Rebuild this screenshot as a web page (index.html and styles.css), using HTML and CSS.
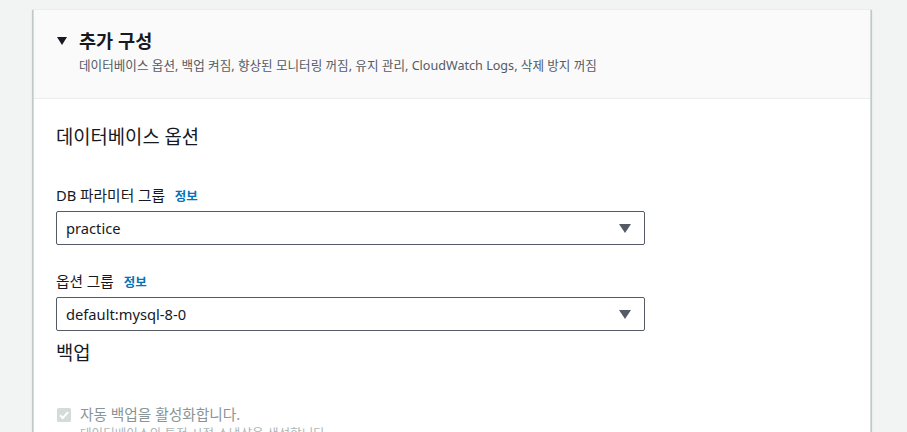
FILE: index.html
```html
<!DOCTYPE html>
<html lang="ko">
<head>
<meta charset="utf-8">
<link rel="stylesheet" href="styles.css">
</head>
<body>
<div class="page">
  <section class="card">
    <header class="card-head">
      <div class="title-row">
        <span class="caret"></span>
        <h2 class="title">추가 구성</h2>
      </div>
      <p class="desc">데이터베이스 옵션, 백업 켜짐, 향상된 모니터링 꺼짐, 유지 관리, CloudWatch Logs, 삭제 방지 꺼짐</p>
    </header>
    <div class="card-body">
      <h3 class="section-title">데이터베이스 옵션</h3>
      <div class="field">
        <label class="label">DB 파라미터 그룹 <a class="info">정보</a></label>
        <div class="select"><span>practice</span><span class="arrow"></span></div>
      </div>
      <div class="field">
        <label class="label">옵션 그룹 <a class="info">정보</a></label>
        <div class="select"><span>default:mysql-8-0</span><span class="arrow"></span></div>
      </div>
      <h3 class="section-title backup">백업</h3>
      <div class="check-row">
        <span class="checkbox">
          <svg width="14" height="14" viewBox="0 0 14 14"><rect x="0" y="0" width="14" height="14" rx="1.5" fill="#d5dbdb"/><path d="M3 7.2 L5.8 10 L11 4.2" fill="none" stroke="#fff" stroke-width="2"/></svg>
        </span>
        <div class="check-text">
          <div class="check-label">자동 백업을 활성화합니다.</div>
          <div class="check-desc">데이터베이스의 특정 시점 스냅샷을 생성합니다.</div>
        </div>
      </div>
    </div>
  </section>
</div>
</body>
</html>
```

FILE: styles.css
```css
* { box-sizing: border-box; }
html, body { margin: 0; padding: 0; }
body {
  background: #f2f3f3;
  font-family: "Noto Sans", "Noto Sans CJK KR", sans-serif;
  color: #16191f;
  overflow: hidden;
}
.page {
  padding: 9px 36px 0 33px;
}
.card {
  background: #fff;
  border-left: 1px solid #d5dbdb;
  border-right: 1px solid #d5dbdb;
  border-top: 1px solid #eaeded;
  box-shadow: 0 1px 1px 0 rgba(0,28,36,0.3), 1px 1px 1px 0 rgba(0,28,36,0.15), -1px 1px 1px 0 rgba(0,28,36,0.15);
  width: 838px;
}
.card-head {
  background: #fafafa;
  border-bottom: 1px solid #eaeded;
  padding: 19px 22px 0 22px;
  height: 89px;
}
.title-row {
  display: flex;
  align-items: center;
  gap: 12px;
}
.caret {
  width: 0; height: 0;
  border-left: 5px solid transparent;
  border-right: 5px solid transparent;
  border-top: 8px solid #16191f;
  margin-left: 1px;
}
.title {
  margin: 0;
  font-size: 18.6px;
  font-weight: 700;
  line-height: 24px;
}
.desc {
  margin: 5px 0 0 23px;
  font-size: 12.6px;
  line-height: 16px;
  color: #545b64;
}
.card-body {
  padding: 24px 22px 0 22px;
}
.section-title {
  margin: 0;
  font-size: 18.8px;
  font-weight: 400;
  line-height: 28px;
}
.field { margin-top: 34px; width: 589px; }
.field + .field { margin-top: 26px; }
.label {
  display: block;
  font-size: 14.7px;
  line-height: 20px;
  margin-bottom: 4px;
}
.info {
  font-size: 12.5px;
  font-weight: 700;
  color: #0073bb;
  margin-left: 6px;
}
.select {
  height: 34px;
  border: 1px solid #545b64;
  border-radius: 2px;
  display: flex;
  align-items: center;
  justify-content: space-between;
  padding: 0 13px 0 9px;
  font-size: 14.7px;
}
.arrow {
  width: 0; height: 0;
  border-left: 6px solid transparent;
  border-right: 6px solid transparent;
  border-top: 9px solid #545b64;
}
.backup { margin-top: 8px; }
.check-row {
  display: flex;
  gap: 9px;
  margin-top: 37px;
  padding-left: 1px;
}
.checkbox { padding-top: 4px; display: flex; }
.check-label { font-size: 14.7px; line-height: 20px; color: #879596; }
.check-desc { font-size: 12.6px; line-height: 18px; color: #aab7b8; margin-top: 1px; }
```
